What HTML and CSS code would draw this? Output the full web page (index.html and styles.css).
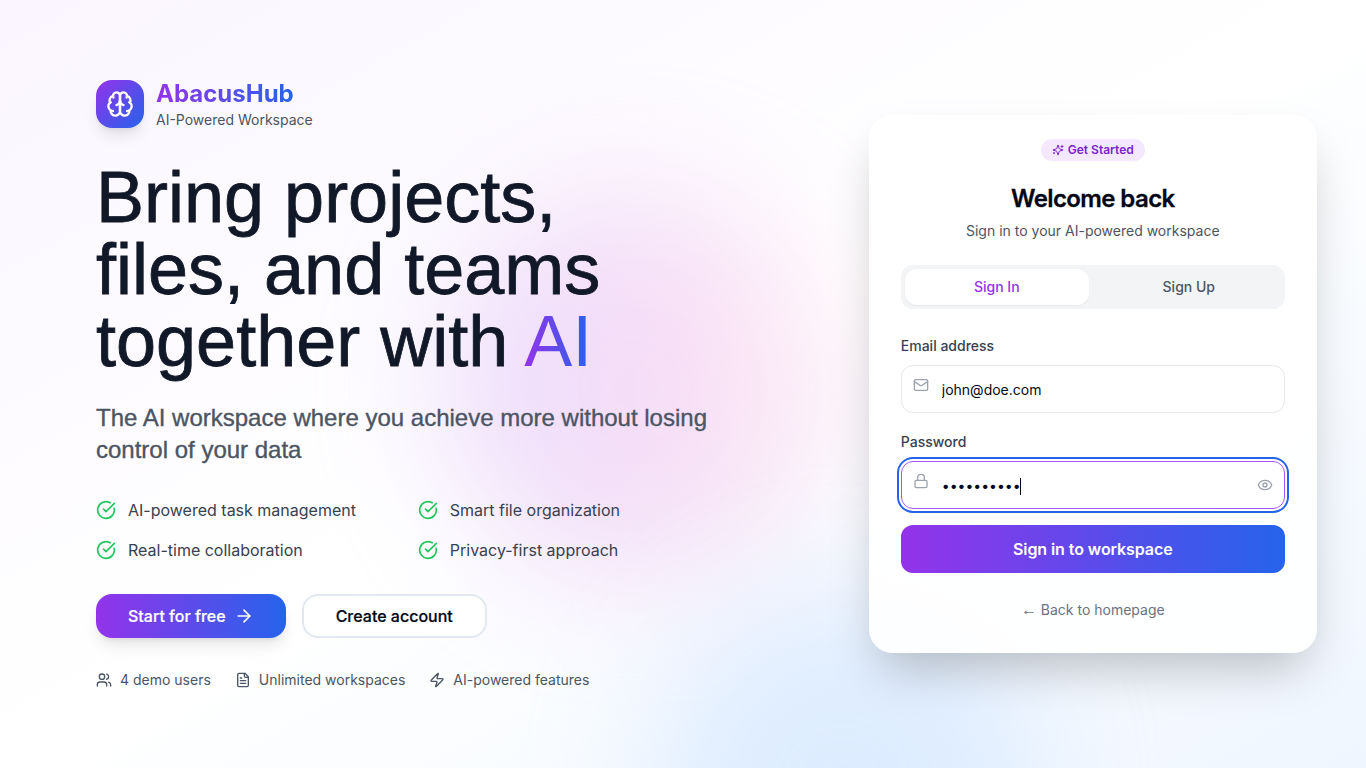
FILE: index.html
```html
<!DOCTYPE html>
<html lang="en">
<head>
<meta charset="utf-8">
<title>AbacusHub</title>
<link rel="stylesheet" href="styles.css">
</head>
<body>
<div class="page">
  <div class="blob blob-purple"></div>
  <div class="blob blob-blue"></div>
  <main class="hero">
    <div class="brand">
      <div class="brand-icon">
        <svg class="icon i28" viewBox="0 0 24 24"><path d="M12 5a3 3 0 1 0-5.997.125 4 4 0 0 0-2.526 5.77 4 4 0 0 0 .556 6.588A4 4 0 1 0 12 18Z"/><path d="M12 5a3 3 0 1 1 5.997.125 4 4 0 0 1 2.526 5.77 4 4 0 0 1-.556 6.588A4 4 0 1 1 12 18Z"/><path d="M15 13a4.5 4.5 0 0 1-3-4 4.5 4.5 0 0 1-3 4"/><path d="M17.599 6.5a3 3 0 0 0 .399-1.375"/><path d="M6.003 5.125A3 3 0 0 0 6.401 6.5"/><path d="M3.477 10.896a4 4 0 0 1 .585-.396"/><path d="M19.938 10.5a4 4 0 0 1 .585.396"/><path d="M6 18a4 4 0 0 1-1.967-.516"/><path d="M19.967 17.484A4 4 0 0 1 18 18"/></svg>
      </div>
      <div class="brand-text">
        <span class="brand-name">AbacusHub</span>
        <span class="brand-tag">AI-Powered Workspace</span>
      </div>
    </div>
    <h1 class="headline">Bring projects,<br>files, and teams<br>together with <span class="accent">AI</span></h1>
    <p class="lead">The AI workspace where you achieve more without losing control of your data</p>
    <div class="features">
      <div class="feature"><svg class="icon i20" viewBox="0 0 24 24"><path d="M21.801 10A10 10 0 1 1 17 3.335"/><path d="m9 11 3 3L22 4"/></svg><span>AI-powered task management</span></div>
      <div class="feature"><svg class="icon i20" viewBox="0 0 24 24"><path d="M21.801 10A10 10 0 1 1 17 3.335"/><path d="m9 11 3 3L22 4"/></svg><span>Smart file organization</span></div>
      <div class="feature"><svg class="icon i20" viewBox="0 0 24 24"><path d="M21.801 10A10 10 0 1 1 17 3.335"/><path d="m9 11 3 3L22 4"/></svg><span>Real-time collaboration</span></div>
      <div class="feature"><svg class="icon i20" viewBox="0 0 24 24"><path d="M21.801 10A10 10 0 1 1 17 3.335"/><path d="m9 11 3 3L22 4"/></svg><span>Privacy-first approach</span></div>
    </div>
    <div class="actions">
      <button class="btn btn-primary">Start for free<svg class="icon i20" viewBox="0 0 24 24"><path d="M5 12h14"/><path d="m12 5 7 7-7 7"/></svg></button>
      <button class="btn btn-outline">Create account</button>
    </div>
    <div class="stats">
      <div class="stat"><svg class="icon i16" viewBox="0 0 24 24"><path d="M16 21v-2a4 4 0 0 0-4-4H6a4 4 0 0 0-4 4v2"/><circle cx="9" cy="7" r="4"/><path d="M22 21v-2a4 4 0 0 0-3-3.870"/><path d="M16 3.130a4 4 0 0 1 0 7.750"/></svg><span>4 demo users</span></div>
      <div class="stat"><svg class="icon i16" viewBox="0 0 24 24"><path d="M15 2H6a2 2 0 0 0-2 2v16a2 2 0 0 0 2 2h12a2 2 0 0 0 2-2V7Z"/><path d="M14 2v4a2 2 0 0 0 2 2h4"/><path d="M10 9H8"/><path d="M16 13H8"/><path d="M16 17H8"/></svg><span>Unlimited workspaces</span></div>
      <div class="stat"><svg class="icon i16" viewBox="0 0 24 24"><path d="M4 14a1 1 0 0 1-.78-1.63l9.900-10.200a.5.5 0 0 1 .860.460l-1.920 6.020A1 1 0 0 0 13 10h7a1 1 0 0 1 .780 1.630l-9.900 10.200a.5.5 0 0 1-.860-.460l1.920-6.020A1 1 0 0 0 11 14z"/></svg><span>AI-powered features</span></div>
    </div>
  </main>
  <aside class="side">
    <div class="card">
      <div class="badge"><svg class="icon i12" viewBox="0 0 24 24"><path d="M9.937 15.500A2 2 0 0 0 8.500 14.063l-6.135-1.582a.5.5 0 0 1 0-.962L8.500 9.936A2 2 0 0 0 9.937 8.500l1.582-6.135a.5.5 0 0 1 .963 0L14.063 8.500A2 2 0 0 0 15.500 9.937l6.135 1.581a.5.5 0 0 1 0 .964L15.500 14.063a2 2 0 0 0-1.437 1.437l-1.582 6.135a.5.5 0 0 1-.963 0z"/><path d="M20 3v4"/><path d="M22 5h-4"/><path d="M4 17v2"/><path d="M5 18H3"/></svg><span class="badge-text">Get Started</span></div>
      <h2 class="card-title">Welcome back</h2>
      <p class="card-sub">Sign in to your AI-powered workspace</p>
      <div class="tabs"><button class="tab tab-active">Sign In</button><button class="tab">Sign Up</button></div>
      <label class="label" for="email">Email address</label>
      <div class="field">
        <svg class="icon i16" viewBox="0 0 24 24"><rect width="20" height="16" x="2" y="4" rx="2"/><path d="m22 7-8.970 5.700a1.940 1.940 0 0 1-2.060 0L2 7"/></svg>
        <input class="input" id="email" type="email" value="john@doe.com">
      </div>
      <span class="label">Password</span>
      <div class="field field-focus">
        <svg class="icon i16" viewBox="0 0 24 24"><rect width="18" height="11" x="3" y="11" rx="2"/><path d="M7 11V7a5 5 0 0 1 10 0v4"/></svg>
        <div class="input dots">••••••••••<span class="caret"></span></div>
        <svg class="icon i16 eye" viewBox="0 0 24 24"><path d="M2.062 12.348a1 1 0 0 1 0-.696 10.750 10.750 0 0 1 19.876 0 1 1 0 0 1 0 .696 10.750 10.750 0 0 1-19.876 0"/><circle cx="12" cy="12" r="3"/></svg>
      </div>
      <button class="submit">Sign in to workspace</button>
      <a class="back"><span class="back-arrow">←</span> Back to homepage</a>
    </div>
  </aside>
</div>
</body>
</html>
```
FILE: styles.css
```css
* { box-sizing: border-box; margin: 0; padding: 0; }
body { font-family: Inter, sans-serif; color: #020817; }
button, input { font: inherit; border: 0; color: inherit; }
.page { position: relative; display: flex; width: 100%; height: 768px; overflow: hidden; background: linear-gradient(to bottom right, #faf5ff, #fff, #eff6ff); }
.icon { fill: none; stroke: currentColor; stroke-width: 2; stroke-linecap: round; stroke-linejoin: round; flex: none; display: block; }
.i28 { width: 28px; height: 28px; }
.i20 { width: 20px; height: 20px; }
.i16 { width: 16px; height: 16px; }
.i12 { width: 12px; height: 12px; }
.blob { position: absolute; border-radius: 50%; filter: blur(64px); }
.blob-purple { left: 440px; top: 192px; width: 390px; height: 390px; background: linear-gradient(to right, #d3bdfa, #e6b6f0 40%, #f3c2ec 75%, #fbcfe0); opacity: .47; }
.blob-blue { left: 650px; top: 590px; width: 384px; height: 384px; background: #bfdbfe; opacity: .44; }
.hero { position: relative; width: 60%; padding: 0 96px; display: flex; flex-direction: column; justify-content: center; }
.brand { display: flex; align-items: center; gap: 12px; margin-bottom: 31px; }
.brand-icon { width: 48px; height: 48px; border-radius: 16px; display: flex; align-items: center; justify-content: center; color: #fff; background: linear-gradient(to bottom right, #9333ea, #2563eb); box-shadow: 0 10px 15px -3px rgba(0,0,0,.1), 0 4px 6px -4px rgba(0,0,0,.1); }
.brand-text { display: flex; flex-direction: column; align-items: flex-start; }
.brand-name, .accent { color: transparent; background: linear-gradient(to right, #9333ea, #2563eb); -webkit-background-clip: text; background-clip: text; }
.brand-name { font-size: 24px; line-height: 32px; font-weight: 700; }
.brand-tag { font-size: 14px; line-height: 20px; color: #4b5563; }
.headline { font: 400 72px/72px "Liberation Sans", Arial, sans-serif; color: #111827; -webkit-text-stroke: .8px #111827; white-space: nowrap; margin-bottom: 25px; }
.accent { -webkit-text-stroke: 0 transparent; }
.lead { font: 400 24px/32px "Liberation Sans", Arial, sans-serif; color: #4b5563; -webkit-text-stroke: .35px #4b5563; margin-bottom: 32px; }
.features { display: grid; grid-template-columns: 1fr 1fr; gap: 16px; margin-bottom: 32px; }
.feature { display: flex; align-items: center; gap: 12px; font-size: 16px; line-height: 24px; color: #374151; }
.feature .icon { color: #22c55e; }
.actions { display: flex; gap: 16px; margin-bottom: 32px; }
.btn { height: 44px; border-radius: 16px; padding: 0 32px; font-size: 16px; font-weight: 500; display: flex; align-items: center; gap: 8px; white-space: nowrap; -webkit-text-stroke: .2px currentColor; }
.btn-primary { color: #fff; background: linear-gradient(to right, #9333ea, #2563eb); box-shadow: 0 10px 15px -3px rgba(0,0,0,.1), 0 4px 6px -4px rgba(0,0,0,.1); }
.btn-outline { background: #fff; border: 2px solid #e2e8f0; }
.stats { display: flex; gap: 24px; font-size: 14px; line-height: 20px; color: #4b5563; }
.stat { display: flex; align-items: center; gap: 8px; }
.side { position: relative; width: 40%; display: flex; align-items: center; justify-content: center; }
.card { width: 448px; height: 538px; padding: 24px 32px; border-radius: 24px; background: rgba(255,255,255,.9); box-shadow: 0 25px 50px -12px rgba(0,0,0,.25); display: flex; flex-direction: column; }
.badge { align-self: center; display: flex; align-items: center; gap: 4px; height: 22px; padding: 0 11px; border-radius: 11px; background: #f3e8ff; color: #7e22ce; font-size: 12px; font-weight: 600; }
.badge-text { padding-bottom: 2px; }
.card-title { margin-top: 22px; font-size: 24px; line-height: 32px; font-weight: 600; letter-spacing: -.6px; text-align: center; -webkit-text-stroke: .3px #020817; }
.card-sub { margin-top: 6px; font-size: 14px; line-height: 20px; color: #4b5563; text-align: center; }
.tabs { margin-top: 24px; margin-bottom: 27px; height: 44px; padding: 4px; border-radius: 12px; background: #f3f4f6; display: flex; flex: none; gap: 8px; }
.tab { flex: 1; padding-bottom: 2px; border-radius: 12px; background: none; font-size: 14px; font-weight: 500; color: #4b5563; }
.tab-active { background: #fff; color: #9333ea; box-shadow: 0 1px 2px rgba(0,0,0,.05); }
.label { font-size: 14px; line-height: 20px; font-weight: 500; color: #374151; margin-bottom: 9px; }
.field { position: relative; height: 48px; flex: none; margin-bottom: 19px; border: 1px solid #e5e7eb; border-radius: 12px; background: #fff; }
.field .icon { position: absolute; left: 11px; top: 11px; color: #9ca3af; }
.field .icon.eye { left: auto; right: 11px; top: 15px; }
.field-focus { border-color: #a855f7; outline: 2px solid #2563eb; outline-offset: 2px; margin-bottom: 16px; }
.input { display: flex; align-items: center; width: 100%; height: 46px; padding: 0 40px; border-radius: 11px; background: none; font-size: 14px; line-height: 20px; outline: 0; }
.dots { padding-top: 2px; }
.caret { width: 1px; height: 17px; margin-left: -1px; background: #020817; }
.submit { height: 48px; flex: none; border-radius: 12px; color: #fff; background: linear-gradient(to right, #9333ea, #2563eb); font-size: 16px; font-weight: 600; letter-spacing: -.08px; }
.back { margin-top: 27px; text-align: center; font-size: 14px; line-height: 20px; color: #6b7280; }
.back-arrow { font-family: "Liberation Sans", Arial, sans-serif; font-size: 16px; line-height: 1; }
```
